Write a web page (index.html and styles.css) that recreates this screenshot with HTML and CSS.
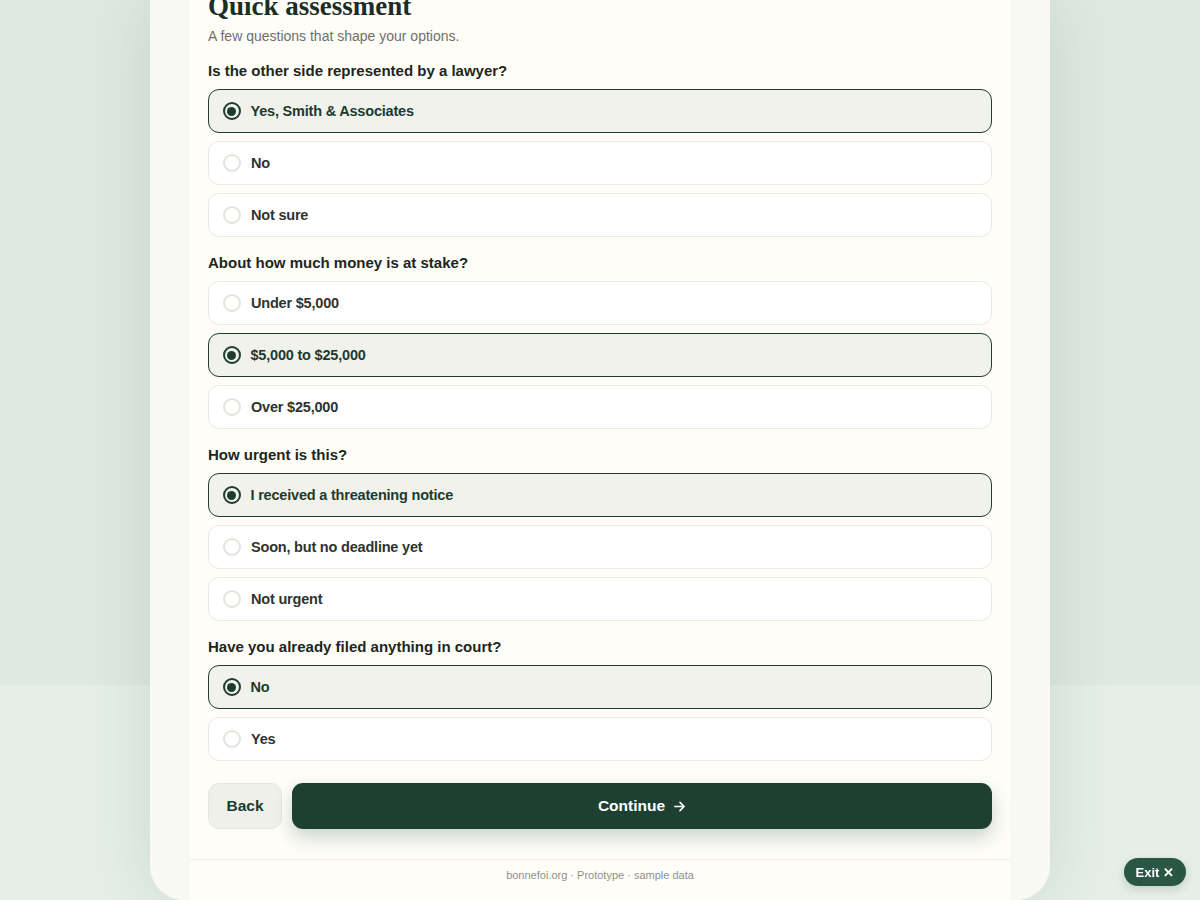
FILE: index.html
```html
<!DOCTYPE html>
<html lang="en">
<head>
    <meta charset="UTF-8">
    <meta name="viewport" content="width=device-width, initial-scale=1.0">
    <title>Quick assessment</title>
    <link rel="stylesheet" href="styles.css">
</head>
<body>
    <div class="stage">
        <div class="device">
            <div class="screen">
                <div class="content">
                    <h1 class="title">Quick assessment</h1>
                    <p class="subtitle">A few questions that shape your options.</p>

                    <!-- Question 1 -->
                    <div class="question">
                        <div class="question-label">Is the other side represented by a lawyer?</div>
                        <div class="option selected"><span class="radio"></span>Yes, Smith &amp; Associates</div>
                        <div class="option"><span class="radio"></span>No</div>
                        <div class="option"><span class="radio"></span>Not sure</div>
                    </div>

                    <!-- Question 2 -->
                    <div class="question">
                        <div class="question-label">About how much money is at stake?</div>
                        <div class="option"><span class="radio"></span>Under $5,000</div>
                        <div class="option selected"><span class="radio"></span>$5,000 to $25,000</div>
                        <div class="option"><span class="radio"></span>Over $25,000</div>
                    </div>

                    <!-- Question 3 -->
                    <div class="question">
                        <div class="question-label">How urgent is this?</div>
                        <div class="option selected"><span class="radio"></span>I received a threatening notice</div>
                        <div class="option"><span class="radio"></span>Soon, but no deadline yet</div>
                        <div class="option"><span class="radio"></span>Not urgent</div>
                    </div>

                    <!-- Question 4 -->
                    <div class="question">
                        <div class="question-label">Have you already filed anything in court?</div>
                        <div class="option selected"><span class="radio"></span>No</div>
                        <div class="option"><span class="radio"></span>Yes</div>
                    </div>

                    <div class="actions">
                        <button class="back-btn">Back</button>
                        <button class="continue-btn">Continue
                            <svg width="13" height="13" viewBox="0 0 14 14" fill="none" stroke="currentColor" stroke-width="1.7" stroke-linecap="round" stroke-linejoin="round">
                                <path d="M2 7h10M7.5 2.5L12 7l-4.5 4.5"/>
                            </svg>
                        </button>
                    </div>
                </div>
                <div class="footer">bonnefoi.org · Prototype · sample data</div>
            </div>
        </div>
    </div>

    <button class="exit-btn">Exit ✕</button>
</body>
</html>
```

FILE: styles.css
```css
body {
    margin: 0;
    height: 900px;
    overflow: hidden;
    font-family: "Liberation Sans", Arial, sans-serif;
    background: linear-gradient(to bottom, #dee9e1 0, #dee9e1 685px, #e5efe8 685px, #e5efe8 100%);
}

.stage {
    display: flex;
    justify-content: center;
    height: 900px;
}

.device {
    width: 820px;
    height: 900px;
    padding: 0 40px;
    background: #f9f9f4;
    border-radius: 0 0 34px 34px;
    box-shadow: 0 0 70px rgba(40, 70, 55, 0.13);
}

.screen {
    height: 900px;
    background: #fefdf8;
    display: flex;
    flex-direction: column;
}

.content {
    padding: 0 18px;
    flex: 1;
}

.title {
    margin: -11px 0 0;
    font-family: "Liberation Serif", "Times New Roman", serif;
    font-size: 27px;
    line-height: 34px;
    font-weight: bold;
    color: #1c2d25;
}

.subtitle {
    margin: 3px 0 0;
    font-size: 14px;
    line-height: 20px;
    color: #6c716d;
}

.question {
    margin-top: 15px;
    display: flex;
    flex-direction: column;
    gap: 8px;
}
.question + .question {
    margin-top: 16px;
}

.question-label {
    font-size: 15px;
    line-height: 20px;
    font-weight: bold;
    color: #1d2621;
}

.option {
    box-sizing: border-box;
    height: 44px;
    display: flex;
    align-items: center;
    gap: 10px;
    padding: 0 14px;
    background: #ffffff;
    border: 1px solid #ebe9e2;
    border-radius: 11px;
    font-size: 14.5px;
    letter-spacing: -0.2px;
    font-weight: bold;
    color: #30332f;
}

.option.selected {
    background: #f1f2ec;
    border: 1.5px solid #1e3d30;
    padding: 0 13.5px;
    color: #1d3a2e;
}

.radio {
    width: 18px;
    height: 18px;
    box-sizing: border-box;
    border: 2px solid #e4e3dd;
    border-radius: 50%;
    background: #fff;
    display: flex;
    align-items: center;
    justify-content: center;
}

.selected .radio {
    border-color: #1e3d30;
    background: #f1f2ec;
}
.selected .radio::after {
    content: "";
    width: 9px;
    height: 9px;
    border-radius: 50%;
    background: #1e3d30;
}

.actions {
    display: flex;
    gap: 10px;
    margin-top: 22px;
}

.back-btn, .continue-btn {
    height: 46px;
    border-radius: 11px;
    font-family: "Liberation Sans", Arial, sans-serif;
    font-size: 15.5px;
    font-weight: bold;
    cursor: pointer;
}

.back-btn {
    width: 74px;
    background: #f0f0eb;
    border: 1px solid #e7e7e1;
    color: #1d3a2e;
}

.continue-btn {
    flex: 1;
    border: none;
    background: #1d4032;
    color: #ffffff;
    display: flex;
    align-items: center;
    justify-content: center;
    gap: 8px;
    box-shadow: 0 8px 18px rgba(29, 64, 50, 0.22);
}

.footer {
    height: 40px;
    border-top: 1px solid #efeee8;
    text-align: center;
    font-size: 11px;
    line-height: 30px;
    color: #8e918d;
}

.exit-btn {
    position: fixed;
    right: 14px;
    bottom: 14px;
    height: 28px;
    padding: 0 12px;
    border: none;
    border-radius: 14px;
    background: #2a5646;
    color: #fff;
    font-family: "Liberation Sans", Arial, sans-serif;
    font-size: 13px;
    font-weight: bold;
    box-shadow: 0 3px 10px rgba(0, 0, 0, 0.15);
}
```
